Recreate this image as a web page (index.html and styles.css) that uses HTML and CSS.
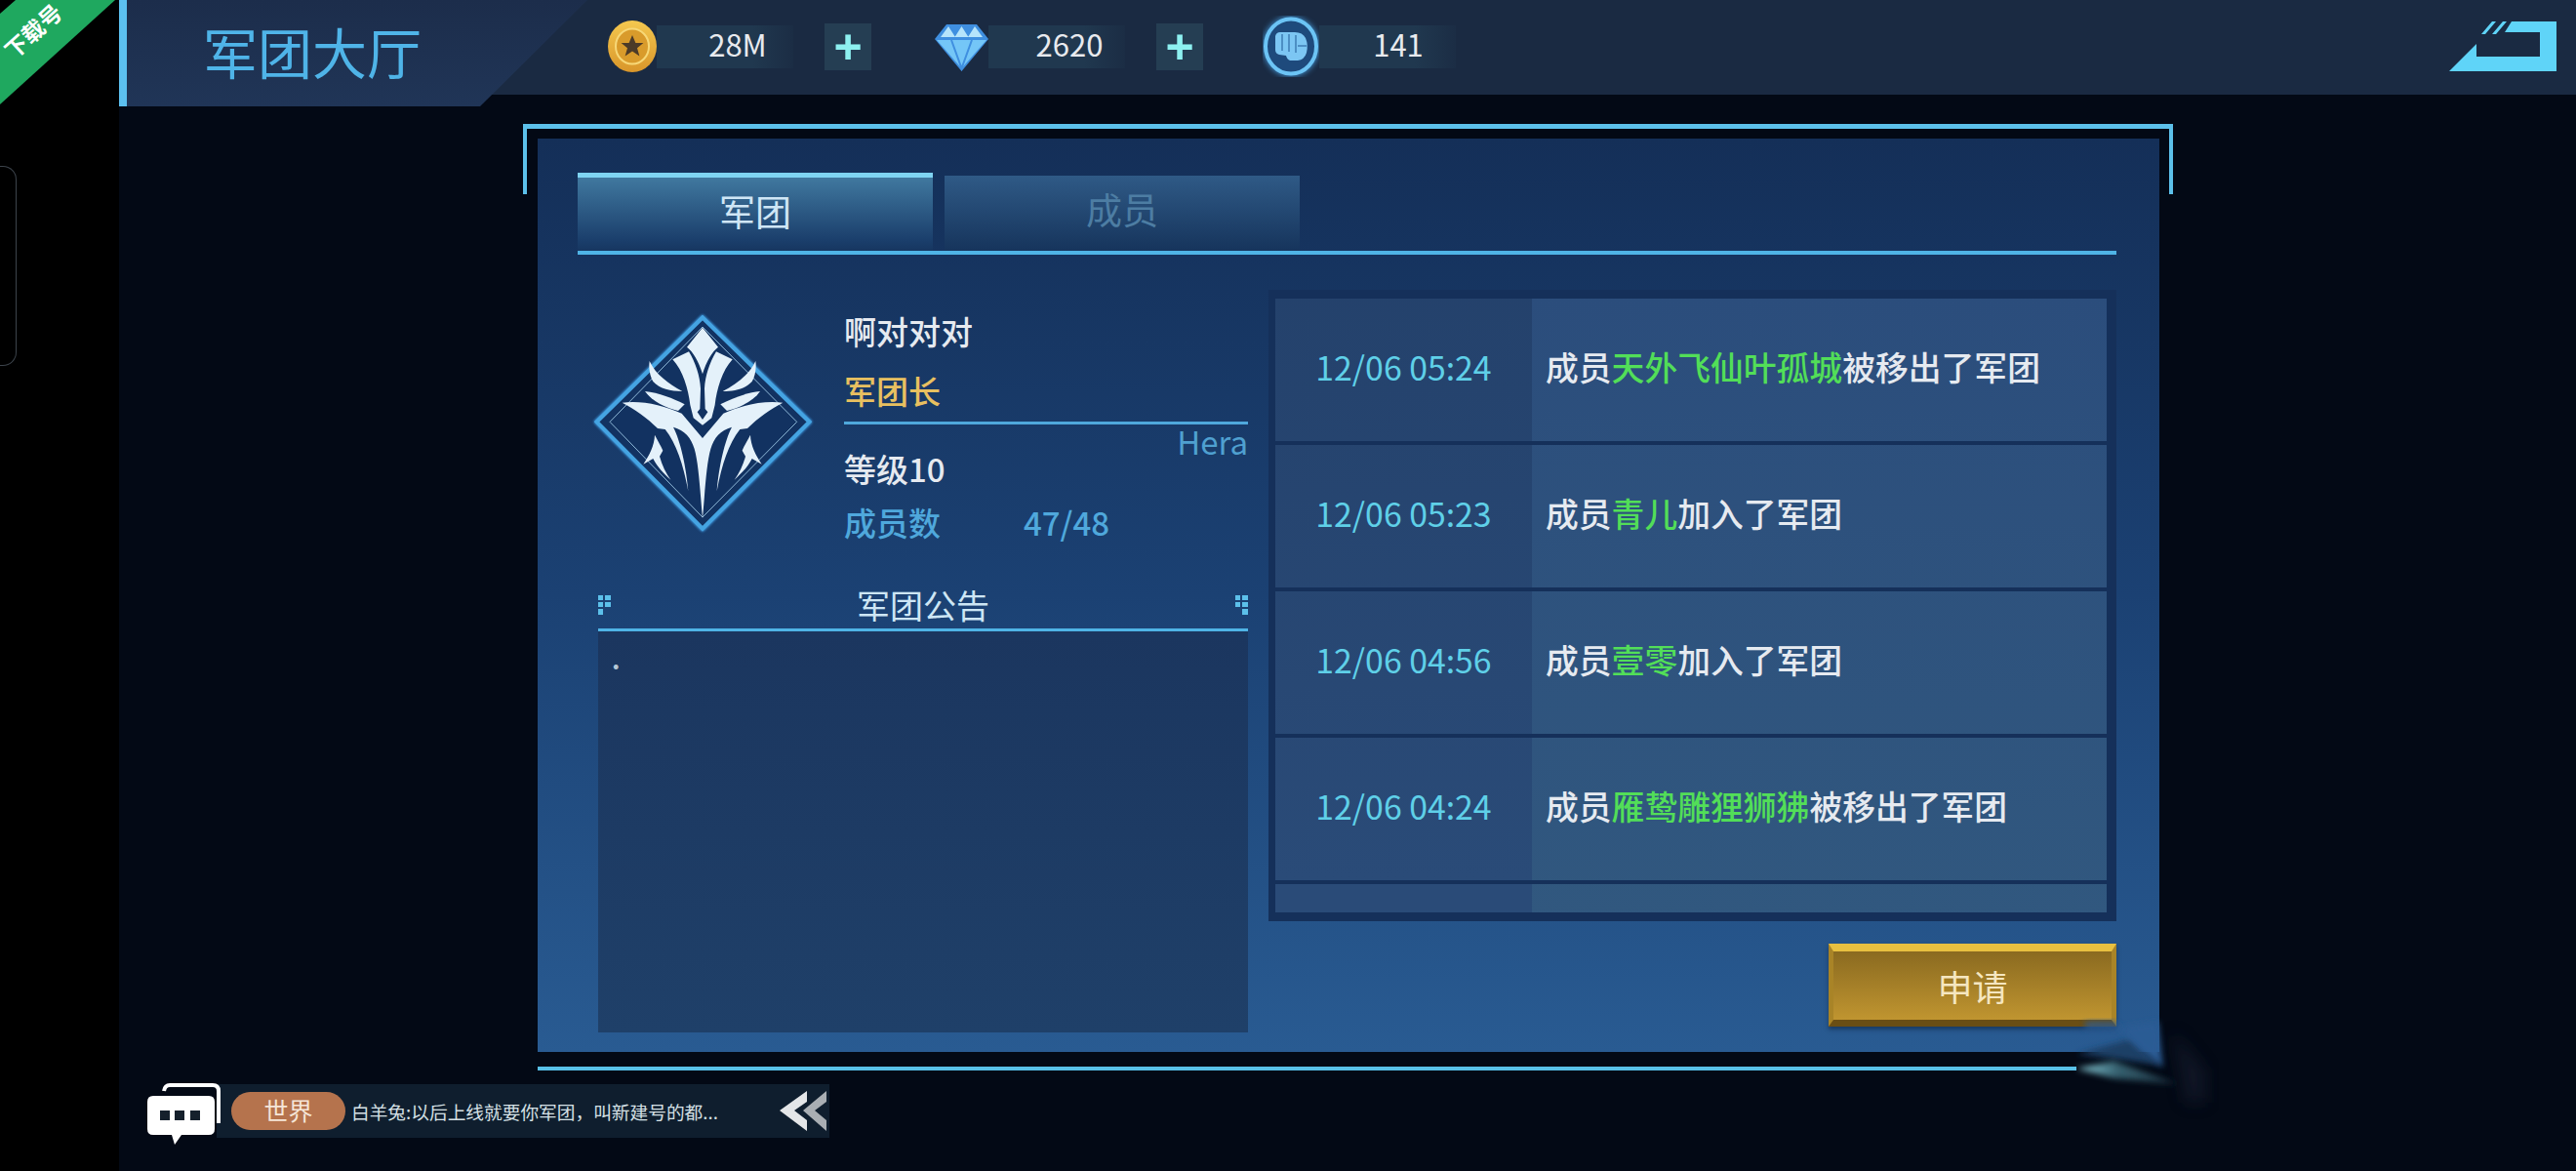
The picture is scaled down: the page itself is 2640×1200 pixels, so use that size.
FILE: index.html
```html
<!DOCTYPE html>
<html lang="zh-CN">
<head>
    <meta charset="UTF-8">
    <title>军团大厅</title>
    <link rel="stylesheet" href="styles.css">
</head>
<body>
    <div class="side">
        <div class="ribbon"><span>下载号</span></div>
        <div class="side-handle"></div>
    </div>

    <div class="game">
        <header class="topbar">
            <h1 class="title">军团大厅</h1>
            <div class="res res-coin">
                <svg class="res-icon" width="50" height="53" viewBox="0 0 50 53">
                    <defs>
                        <linearGradient id="coin" x1="0" y1="0" x2="0" y2="1">
                            <stop offset="0" stop-color="#f4c84f"/>
                            <stop offset="1" stop-color="#d9962a"/>
                        </linearGradient>
                    </defs>
                    <ellipse cx="25" cy="26.500" rx="25" ry="26.500" fill="url(#coin)"/>
                    <ellipse cx="25" cy="26.500" rx="17" ry="18" fill="#d99b2b" stroke="#f7d877" stroke-width="2"/>
                    <path d="M25 15l3.400 8h8l-6.400 5.200 2.400 8.300-7.400-5-7.400 5 2.400-8.300-6.400-5.200h8z" fill="#4c3a28"/>
                </svg>
                <span class="res-value">28M</span>
                <button class="plus">+</button>
            </div>
            <div class="res res-gem">
                <svg class="res-icon" width="55" height="50" viewBox="0 0 55 50">
                    <path d="M12 2h31l12 15-27.500 33L0 17z" fill="#3f8fe0"/>
                    <path d="M2 18h51L27.500 47z" fill="#74c6f7"/>
                    <path d="M14 4l7 11H6zM27.500 4l7 11H20.500zM41 4l8 11H34z" fill="#b6e4fb"/>
                    <path d="M17 18l10.500 29L38 18" fill="none" stroke="#3f8fe0" stroke-width="2"/>
                </svg>
                <span class="res-value">2620</span>
                <button class="plus">+</button>
            </div>
            <div class="res res-fist">
                <svg class="res-icon" width="58" height="63" viewBox="0 0 58 63">
                    <ellipse cx="29" cy="31.500" rx="26" ry="28" fill="#1e4a7c" stroke="#6cc4f5" stroke-width="4" class="fist-ring"/>
                    <path d="M13 21q1-4 5-4h15q8 0 11 6 3 7 1 15-2 7-9 8h-8q-3-1-4-5l-7-1q-4-1-4-5z" fill="#7cc6f3"/>
                    <path d="M20 19v17M27 19v18M34 20v18M36 31h9" fill="none" stroke="#4d8fc4" stroke-width="2"/>
                </svg>
                <span class="res-value">141</span>
            </div>
            <svg class="back" width="110" height="51" viewBox="0 0 110 51">
                <path d="M0 51L28 23V36H93V11H57L64 0H110V51Z" fill="#5fd4f8"/>
                <path d="M33 13L44 0H48L37 13ZM44 13L55 0H59L48 13Z" fill="#5fd4f8"/>
            </svg>
        </header>

        <div class="frame">
            <main class="panel">
                <nav class="tabs">
                    <div class="tab tab-active">军团</div>
                    <div class="tab">成员</div>
                </nav>

                <div class="content">
                    <section class="left">
                        <div class="profile">
                            <svg class="emblem" width="240" height="235" viewBox="0 0 720 705">
                                <defs>
                                    <g id="half" fill="#e4f1fa">
                                        <path d="M268 160L318 136C338 170 352 210 354 250L352 312L344 322L360 345V362L332 340L322 300C316 250 300 195 268 160Z"/>
                                        <path d="M113 293C170 285 240 300 296 326L360 402V650C352 560 348 480 335 435C325 400 305 378 270 368C292 410 310 490 316 565C300 480 280 420 245 375L222 372C190 340 150 312 113 293Z"/>
                                        <path d="M197 165C215 205 255 235 298 258C262 258 228 250 208 228C198 210 194 188 197 165Z"/>
                                        <path d="M183 258C225 262 270 280 305 298L285 318C250 310 205 290 183 258Z"/>
                                        <path d="M213 392C222 410 232 425 238 440L228 458C235 485 248 510 262 530C240 510 222 492 208 465L178 482C196 455 212 425 213 392Z"/>
                                    </g>
                                </defs>
                                <path class="emblem-outer" d="M360 32L688 352L360 680L35 352Z"/>
                                <path class="emblem-inner" d="M360 60L650 352L360 645L75 352Z"/>
                                <path d="M360 62L408 122C390 135 372 165 360 205C348 165 330 135 312 122Z" fill="#e4f1fa"/>
                                <use href="#half"/>
                                <use href="#half" transform="translate(720 0) scale(-1 1)"/>
                            </svg>
                            <div class="info">
                                <div class="info-name">啊对对对</div>
                                <div class="info-role">军团长</div>
                                <div class="info-leader">Hera</div>
                                <div class="info-level">等级10</div>
                                <div class="info-members"><span class="members-label">成员数</span><span>47/48</span></div>
                            </div>
                        </div>

                        <div class="notice-head">
                            <svg width="14" height="20" viewBox="0 0 14 20">
                                <path d="M0 0h5v5H0zM7 0h6v5H7zM0 7h5v5H0zM7 7h6v5H7zM0 14h5v6H0z" fill="#5cc0ea"/>
                            </svg>
                            <span>军团公告</span>
                            <svg width="14" height="20" viewBox="0 0 14 20">
                                <path d="M1 0h5v5H1zM8 0h6v5H8zM1 7h5v5H1zM8 7h6v5H8zM8 14h6v6H8z" fill="#5cc0ea"/>
                            </svg>
                        </div>
                        <div class="notice-body">.</div>
                    </section>

                    <section class="right">
                        <div class="log">
                            <div class="log-row">
                                <div class="log-time">12/06 05:24</div>
                                <div class="log-msg">成员<em>天外飞仙叶孤城</em>被移出了军团</div>
                            </div>
                            <div class="log-row">
                                <div class="log-time">12/06 05:23</div>
                                <div class="log-msg">成员<em>青儿</em>加入了军团</div>
                            </div>
                            <div class="log-row">
                                <div class="log-time">12/06 04:56</div>
                                <div class="log-msg">成员<em>壹零</em>加入了军团</div>
                            </div>
                            <div class="log-row">
                                <div class="log-time">12/06 04:24</div>
                                <div class="log-msg">成员<em>雁鸷雕狸狮狒</em>被移出了军团</div>
                            </div>
                            <div class="log-row">
                                <div class="log-time"></div>
                                <div class="log-msg"></div>
                            </div>
                        </div>
                        <button class="apply">申请</button>
                    </section>
                </div>
            </main>
            <div class="frame-bottom"></div>

            <svg class="smudge" width="170" height="150" viewBox="0 0 510 450">
                <defs>
                    <filter id="soft" x="-30%" y="-30%" width="160%" height="160%">
                        <feGaussianBlur stdDeviation="9"/>
                    </filter>
                    <filter id="soft-wide" x="-40%" y="-40%" width="180%" height="180%">
                        <feGaussianBlur stdDeviation="24"/>
                    </filter>
                    <linearGradient id="ray" x1="0" y1="0" x2="1" y2="0">
                        <stop offset="0" stop-color="#8fd4e0"/>
                        <stop offset="0.4" stop-color="#35606f"/>
                        <stop offset="1" stop-color="#1c3240"/>
                    </linearGradient>
                </defs>
                <polygon points="380,200 480,320 480,420 420,420" fill="#1b2336" opacity="0.5" filter="url(#soft-wide)"/>
                <polygon points="85,270 250,225 345,305 200,285" fill="#1d3f66" filter="url(#soft)"/>
                <polygon points="85,315 200,292 395,362 200,345" fill="url(#ray)" filter="url(#soft)"/>
                <polygon points="215,190 335,170 350,312 285,262" fill="#2a5c94" filter="url(#soft)"/>
                <polygon points="110,170 205,170 225,200 110,195" fill="#2a5c94" opacity="0.8" filter="url(#soft)"/>
            </svg>
        </div>

        <footer class="chat">
            <svg class="chat-icon" width="75" height="63" viewBox="0 0 75 63">
                <path d="M17 8q1-6 6-6h44q6 0 6 6v33" fill="none" stroke="#fff" stroke-width="4"/>
                <path d="M6 13h57q6 0 6 6v28q0 6-6 6H35l-7 10-3-10H6q-6 0-6-6V19q0-6 6-6z" fill="#fff"/>
                <path d="M13 28h10v10H13zM28 28h10v10H28zM44 28h10v10H44z" fill="#15202c"/>
            </svg>
            <div class="chat-bar">
                <span class="chat-channel">世界</span>
                <span class="chat-text">白羊兔:以后上线就要你军团，叫新建号的都...</span>
                <svg class="chat-more" width="48" height="41" viewBox="0 0 48 41">
                    <path d="M48 0L24 20l24 21V30L36 20l12-9z" fill="#a9aeb3"/>
                    <path d="M28 0L0 20l28 21V30L15 20l13-9z" fill="#e4e6e8"/>
                </svg>
            </div>
        </footer>
    </div>
</body>
</html>
```

FILE: styles.css
```css
* {
    box-sizing: border-box;
}

html,
body {
    margin: 0;
    height: 100%;
    overflow: hidden;
}

body {
    display: flex;
    background: #000;
    color: #e6eaf0;
    font-family: "Noto Sans CJK SC", "Noto Sans", sans-serif;
}

/* black strip on the left of the phone screen */
.side {
    position: relative;
    width: 122px;
    flex-shrink: 0;
    padding-top: 170px;
}

.ribbon {
    position: absolute;
    top: 0;
    left: 0;
    width: 118px;
    height: 107px;
    background: #1fa85f;
    clip-path: polygon(16px 0, 100% 0, 0 100%, 0 14px);
}

.ribbon span {
    position: absolute;
    top: 20px;
    left: -1px;
    width: 69px;
    font-size: 23px;
    line-height: 23px;
    font-weight: 700;
    color: #fff;
    text-align: center;
    transform: rotate(-42deg);
}

.side-handle {
    width: 17px;
    height: 205px;
    border: 1px solid #3c434b;
    border-left: none;
    border-radius: 0 14px 14px 0;
}

.game {
    flex: 1;
    background: #030915;
}

/* top bar */
.topbar {
    display: flex;
    align-items: flex-start;
    height: 109px;
    background: linear-gradient(#1a2a42 97px, transparent 97px);
}

.title {
    width: 480px;
    height: 109px;
    margin: 0;
    padding-left: 78px;
    border-left: 8px solid #5cc0ef;
    background: linear-gradient(#1c2d4b, #203557);
    clip-path: polygon(0 0, 100% 0, 370px 100%, 0 100%);
    color: #4fb4e8;
    font-size: 56px;
    font-weight: 400;
    line-height: 104px;
}

.res {
    display: flex;
    align-items: center;
    height: 95px;
}

.res-coin {
    margin-left: 21px;
}

.res-gem {
    margin-left: 65px;
}

.res-fist {
    margin-left: 61px;
}

.res-icon {
    flex-shrink: 0;
}

.fist-ring {
    filter: drop-shadow(0 0 3px #4aa8ee);
}

.res-value {
    width: 140px;
    height: 44px;
    padding-left: 26px;
    background: linear-gradient(90deg, #20384f, #20384f 70%, rgba(32, 56, 79, 0.2));
    font-size: 31px;
    line-height: 37px;
    text-align: center;
    color: #e8eaee;
}

.res-fist .res-value {
    padding-left: 22px;
}

.plus {
    width: 48px;
    height: 48px;
    margin-left: 32px;
    padding: 0;
    border: none;
    background: #253e53;
    color: #8df0f0;
    font-family: "Liberation Sans", sans-serif;
    font-size: 50px;
    font-weight: 700;
    line-height: 44px;
}

.back {
    margin: 22px 20px 0 auto;
}

/* main frame with corner brackets */
.frame {
    position: relative;
    width: 1691px;
    margin: 18px 0 0 414px;
    border-top: 5px solid #5cc0ea;
}

.frame::before,
.frame::after {
    content: "";
    position: absolute;
    top: 0;
    width: 4px;
    height: 67px;
    background: #5cc0ea;
}

.frame::before {
    left: 0;
}

.frame::after {
    right: 0;
}

.panel {
    height: 936px;
    margin: 10px 14px 0 15px;
    padding: 35px 44px 20px 41px;
    display: flex;
    flex-direction: column;
    background: linear-gradient(#142f58, #1b4173 50%, #295b92);
}

.frame-bottom {
    height: 4px;
    margin: 15px 0 0 15px;
    background: linear-gradient(90deg, #58c0e8 1577px, transparent 1577px);
}

.smudge {
    position: absolute;
    left: 1564px;
    top: 858px;
    overflow: visible;
}

.tabs {
    display: flex;
    align-items: flex-end;
    gap: 12px;
    height: 84px;
    border-bottom: 4px solid #4fb4e6;
}

.tab {
    width: 364px;
    height: 77px;
    background: linear-gradient(#2f5a86, #16345c);
    color: #4d7da3;
    font-size: 37px;
    line-height: 68px;
    text-align: center;
}

.tab-active {
    height: 80px;
    border-top: 5px solid #7fd4f2;
    background: linear-gradient(#40789f, #1b3f6c 85%, #163660);
    color: #cfe6f5;
}

.content {
    flex: 1;
    display: flex;
    justify-content: space-between;
}

/* left column */
.left {
    width: 666px;
    margin-left: 21px;
    display: flex;
    flex-direction: column;
}

.profile {
    display: flex;
    margin-top: 62px;
}

.emblem {
    flex-shrink: 0;
    margin: -8px 0 -7px -13px;
    overflow: visible;
}

.emblem-outer {
    fill: #123261;
    stroke: #45a4e2;
    stroke-width: 12;
    filter: drop-shadow(0 0 5px #3f9ae0) drop-shadow(0 0 2px #3f9ae0);
}

.emblem-inner {
    fill: none;
    stroke: #8fb9d8;
    stroke-width: 3;
}

.info {
    flex: 1;
    margin-left: 25px;
    font-size: 33px;
    font-weight: 500;
}

.info-name {
    margin-top: -1px;
    line-height: 34px;
}

.info-role {
    margin-top: 27px;
    padding-bottom: 15px;
    border-bottom: 3px solid #4fa8dc;
    color: #e8c060;
    line-height: 34px;
}

.info-leader {
    margin-top: 2px;
    color: #4fa0d0;
    font-size: 33px;
    font-weight: 400;
    line-height: 30px;
    text-align: right;
}

.info-level {
    line-height: 26px;
}

.info-members {
    display: flex;
    margin-top: 25px;
    color: #4fa8dc;
    font-weight: 500;
    line-height: 34px;
}

.members-label {
    width: 184px;
}

.notice-head {
    display: flex;
    align-items: center;
    justify-content: space-between;
    height: 46px;
    margin-top: 49px;
    padding-bottom: 6px;
    border-bottom: 3px solid #4fb4e6;
    color: #cde6f5;
    font-size: 34px;
    line-height: 37px;
}

.notice-body {
    flex: 1;
    padding: 9px 14px;
    background: linear-gradient(#1b365f, #1f4069);
    color: #b4c6d6;
    font-size: 26px;
    font-weight: 700;
}

/* right column */
.right {
    width: 869px;
    display: flex;
    flex-direction: column;
    align-items: flex-end;
}

.log {
    width: 869px;
    height: 647px;
    margin-top: 36px;
    padding: 9px 10px 0 7px;
    overflow: hidden;
    border-bottom: 9px solid #15305a;
    background: #15305a;
}

.log-row {
    display: flex;
    height: 146px;
    margin-bottom: 4px;
    font-size: 33.800px;
}

.log-time {
    width: 263px;
    background: linear-gradient(#213d66, #2a4b78 900px) fixed;
    color: #5fd0e8;
    line-height: 140px;
    text-align: center;
}

.log-msg {
    flex: 1;
    padding-left: 14px;
    background: linear-gradient(#2b4d7c 300px, #31587f 950px) fixed;
    font-weight: 500;
    line-height: 140px;
}

.log-msg em {
    color: #52de58;
    font-style: normal;
}

.apply {
    width: 295px;
    height: 85px;
    margin-top: 23px;
    padding: 0;
    border-style: solid;
    border-width: 8px 5px 7px;
    border-color: #e8c040 #a98427 #6a4e14 #a98427;
    background: linear-gradient(#8a6a20, #c09530);
    box-shadow: 0 3px 4px rgba(10, 30, 60, 0.5);
    color: #f5e6c0;
    font-family: inherit;
    font-size: 36px;
    line-height: 66px;
}

/* chat line at the bottom */
.chat {
    display: flex;
    align-items: flex-start;
    margin: 13px 0 0 29px;
}

.chat-icon {
    position: relative;
    flex-shrink: 0;
}

.chat-bar {
    display: flex;
    align-items: center;
    width: 628px;
    height: 55px;
    margin: 1px 0 0 -4px;
    padding: 0 3px 0 15px;
    background: #0f1e2e;
}

.chat-channel {
    width: 117px;
    height: 39px;
    border-radius: 20px;
    background: #b5734d;
    color: #f5e6d8;
    font-size: 25px;
    line-height: 37px;
    text-align: center;
}

.chat-text {
    margin-left: 6px;
    color: #d5e0e5;
    font-size: 18.700px;
    white-space: nowrap;
}

.chat-more {
    margin-left: auto;
}
```
